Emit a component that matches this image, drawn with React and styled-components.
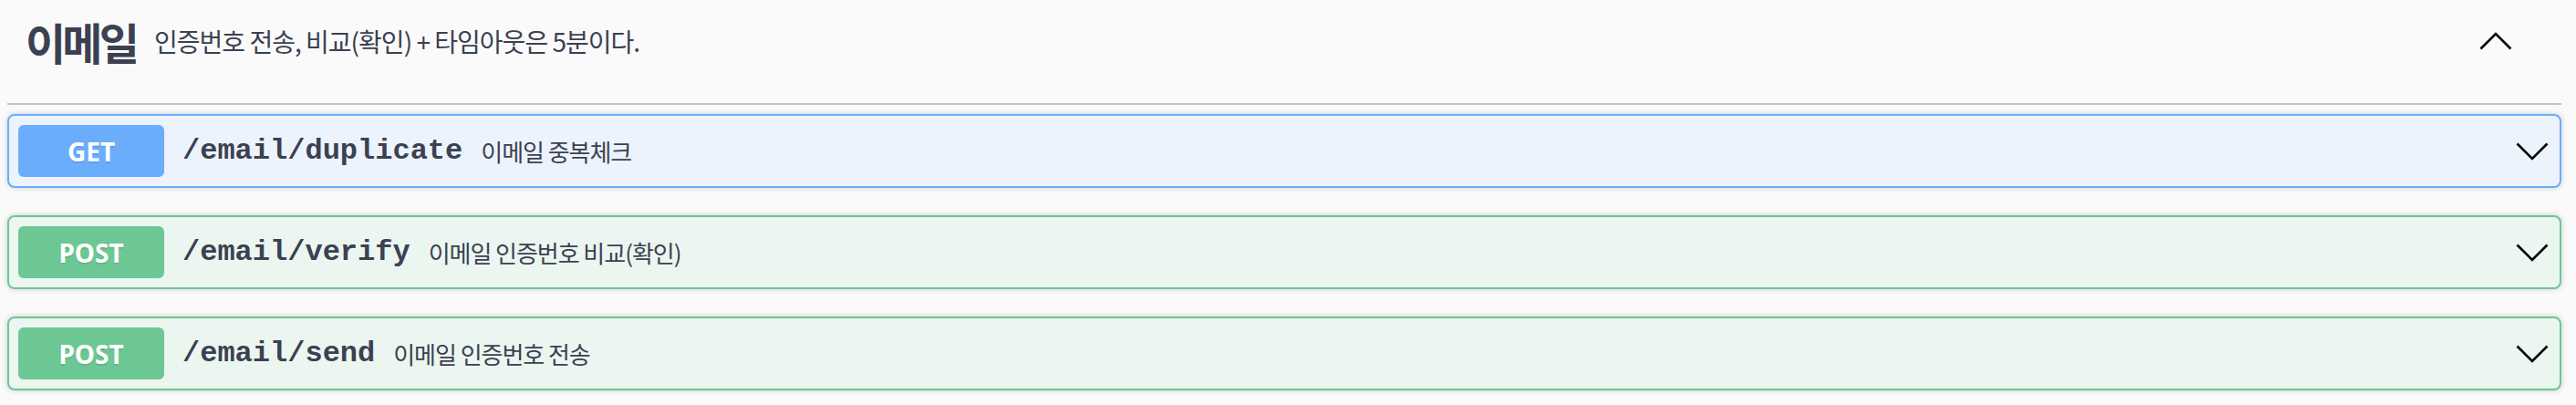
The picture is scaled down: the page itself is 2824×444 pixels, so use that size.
import React from "react";
import styled, { createGlobalStyle } from "styled-components";

const GlobalStyle = createGlobalStyle`
    body {
        margin: 0;
        background: #fafafa;
    }
`;

const methodColors = {
    get: { main: "#6aaefb", bg: "#ecf3fc" },
    post: { main: "#6cc794", bg: "#ebf6f0" },
};

const Page = styled.div`
    padding: 0 16px 0 8px;
    color: #3b4151;
    font-family: "Noto Sans CJK KR", "Noto Sans", sans-serif;
`;

const TagHeader = styled.div`
    display: flex;
    align-items: center;
    height: 89px;
    padding: 0 54px 24px 20px;
    margin: 0 0 10px;
    border-bottom: 2px solid #c3c4c9;
`;

const TagTitle = styled.h3`
    margin: 0;
    font-size: 48px;
    font-weight: 700;
    line-height: 1;
    letter-spacing: -0.08em;
`;

const TagDescription = styled.small`
    flex: 1;
    padding: 0 20px;
    font-size: 28px;
    line-height: 1;
    letter-spacing: -0.035em;
`;

const OpBlock = styled.div`
    margin: 0 0 30px;
    border: 2px solid ${p => methodColors[p.$method].main};
    border-radius: 8px;
    background: ${p => methodColors[p.$method].bg};
    box-shadow: 0 0 6px rgba(0, 0, 0, 0.19);
`;

const Summary = styled.div`
    display: flex;
    align-items: center;
    padding: 10px 12px 10px 10px;
`;

const MethodBadge = styled.span`
    display: flex;
    align-items: center;
    justify-content: center;
    min-width: 160px;
    height: 57px;
    border-radius: 6px;
    background: ${p => methodColors[p.$method].main};
    color: #fff;
    font-family: "Noto Sans", sans-serif;
    font-size: 28px;
    font-weight: 700;
    text-shadow: 0 2px 0 rgba(0, 0, 0, 0.1);
`;

const Path = styled.span`
    padding: 0 20px;
    font-family: "Liberation Mono", monospace;
    font-size: 32px;
    font-weight: 700;
    color: #3b4151;
`;

const Description = styled.span`
    flex: 1;
    font-size: 26px;
    letter-spacing: -0.04em;
`;

const Chevron = ({ up }) => (
    <svg width="36" height="20" viewBox="0 0 36 20">
        <polyline
            points={up ? "1.5,18.5 18,2 34.5,18.5" : "1.5,1.5 18,18 34.5,1.5"}
            fill="none"
            stroke="#000"
            strokeWidth="2.6"
        />
    </svg>
);

const operations = [
    { method: "get", path: "/email/duplicate", summary: "이메일 중복체크" },
    { method: "post", path: "/email/verify", summary: "이메일 인증번호 비교(확인)" },
    { method: "post", path: "/email/send", summary: "이메일 인증번호 전송" },
];

export default function App() {
    return (
        <Page>
            <GlobalStyle />
            <TagHeader>
                <TagTitle>이메일</TagTitle>
                <TagDescription>인증번호 전송, 비교(확인) + 타임아웃은 5분이다.</TagDescription>
                <Chevron up />
            </TagHeader>
            {operations.map(op => (
                <OpBlock key={op.path} $method={op.method}>
                    <Summary>
                        <MethodBadge $method={op.method}>{op.method.toUpperCase()}</MethodBadge>
                        <Path>{op.path}</Path>
                        <Description>{op.summary}</Description>
                        <Chevron />
                    </Summary>
                </OpBlock>
            ))}
        </Page>
    );
}
